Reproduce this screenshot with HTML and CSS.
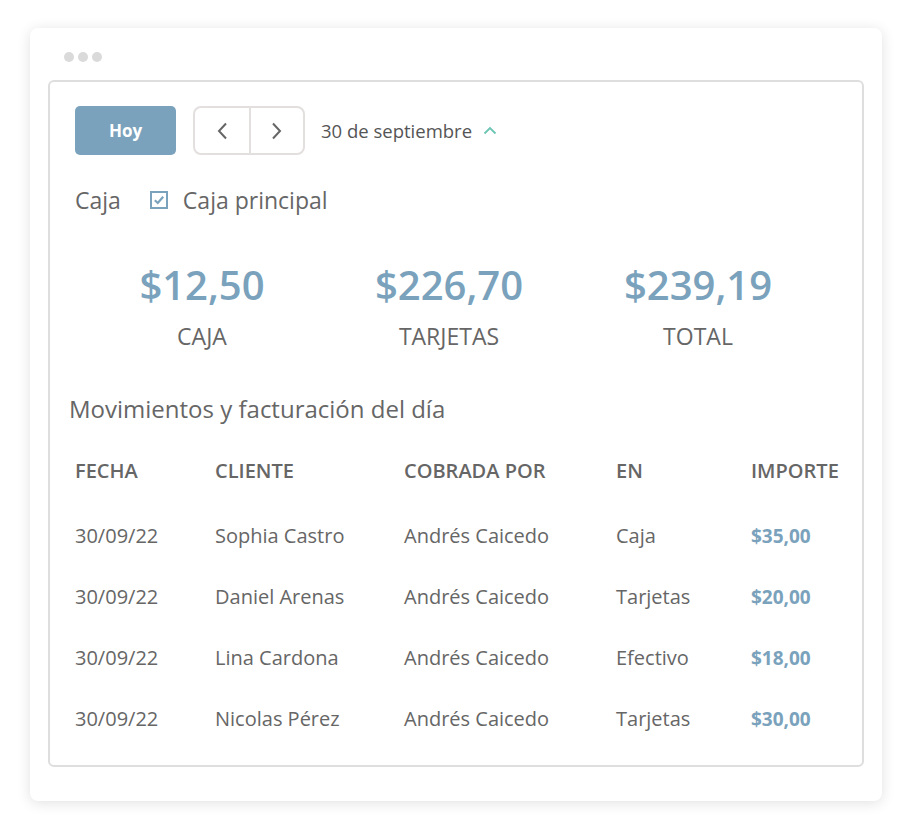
FILE: index.html
```html
<!DOCTYPE html>
<html lang="es">
<head>
    <meta charset="UTF-8">
    <meta name="viewport" content="width=device-width, initial-scale=1.0">
    <title>Caja</title>
    <link rel="stylesheet" href="styles.css">
</head>
<body>
    <div class="window">
        <div class="dots">
            <span></span><span></span><span></span>
        </div>

        <div class="panel">
            <div class="toolbar">
                <button class="today">Hoy</button>
                <div class="nav">
                    <button class="nav-btn">
                        <svg width="12" height="20" viewBox="0 0 12 20"><path d="M10 2.5 L3 10 L10 17.5" fill="none" stroke="#666" stroke-width="2"/></svg>
                    </button>
                    <button class="nav-btn">
                        <svg width="12" height="20" viewBox="0 0 12 20"><path d="M2 2.5 L9 10 L2 17.5" fill="none" stroke="#666" stroke-width="2"/></svg>
                    </button>
                </div>
                <span class="date">30 de septiembre</span>
                <svg class="caret" width="14" height="9" viewBox="0 0 14 9"><path d="M1.5 7.5 L7 2 L12.5 7.5" fill="none" stroke="#6cc4b4" stroke-width="1.8"/></svg>
            </div>

            <div class="caja-row">
                <span class="caja-label">Caja</span>
                <span class="check">
                    <svg width="18" height="18" viewBox="0 0 18 18"><rect x="1" y="1" width="16" height="16" fill="none" stroke="#7aa2bc" stroke-width="2"/><path d="M4.8 9.2 L7.8 12 L13.2 5.8" fill="none" stroke="#7aa2bc" stroke-width="2.2"/></svg>
                </span>
                <span class="caja-label">Caja principal</span>
            </div>

            <div class="stats">
                <div class="stat">
                    <div class="stat-value">$12,50</div>
                    <div class="stat-label">CAJA</div>
                </div>
                <div class="stat">
                    <div class="stat-value">$226,70</div>
                    <div class="stat-label">TARJETAS</div>
                </div>
                <div class="stat">
                    <div class="stat-value">$239,19</div>
                    <div class="stat-label">TOTAL</div>
                </div>
            </div>

            <h2 class="section-title">Movimientos y facturación del día</h2>

            <div class="table">
                <div class="row head">
                    <span>FECHA</span><span>CLIENTE</span><span>COBRADA POR</span><span>EN</span><span>IMPORTE</span>
                </div>
                <div class="row">
                    <span>30/09/22</span><span>Sophia Castro</span><span>Andrés Caicedo</span><span>Caja</span><span class="amount">$35,00</span>
                </div>
                <div class="row">
                    <span>30/09/22</span><span>Daniel Arenas</span><span>Andrés Caicedo</span><span>Tarjetas</span><span class="amount">$20,00</span>
                </div>
                <div class="row">
                    <span>30/09/22</span><span>Lina Cardona</span><span>Andrés Caicedo</span><span>Efectivo</span><span class="amount">$18,00</span>
                </div>
                <div class="row">
                    <span>30/09/22</span><span>Nicolas Pérez</span><span>Andrés Caicedo</span><span>Tarjetas</span><span class="amount">$30,00</span>
                </div>
            </div>
        </div>
    </div>
</body>
</html>
```

FILE: styles.css
```css
body {
    font-family: "Open Sans", sans-serif;
    background-color: #ffffff;
    margin: 0;
    padding: 28px 30px 33px 30px;
    color: #666;
}

.window {
    background-color: #fff;
    border-radius: 8px;
    box-shadow: 0 2px 14px rgba(0, 0, 0, 0.12);
    padding: 24px 18px 34px 18px;
}

.dots {
    display: flex;
    gap: 4px;
    padding-left: 16px;
    height: 10px;
    margin-bottom: 18px;
}

.dots span {
    width: 10px;
    height: 10px;
    border-radius: 50%;
    background-color: #dadada;
}

.panel {
    border: 2px solid #dedede;
    border-radius: 6px;
    padding: 24px 20px 16px 25px;
}

.toolbar {
    display: flex;
    align-items: center;
}

button {
    font-family: inherit;
    cursor: pointer;
}

.today {
    width: 101px;
    height: 49px;
    background-color: #7aa2bc;
    color: #fff;
    border: none;
    border-radius: 5px;
    font-size: 17px;
    font-weight: 700;
}

.nav {
    display: flex;
    margin-left: 17px;
    border: 2px solid #e4dfdf;
    border-radius: 8px;
    height: 45px;
}

.nav-btn {
    width: 54px;
    background: none;
    border: none;
    display: flex;
    align-items: center;
    justify-content: center;
    padding: 0;
}

.nav-btn + .nav-btn {
    border-left: 2px solid #e4dfdf;
}

.date {
    margin-left: 16px;
    font-size: 18.5px;
    color: #555;
}

.caret {
    margin-left: 11px;
}

.caja-row {
    display: flex;
    align-items: center;
    margin-top: 30px;
    height: 30px;
}

.caja-label {
    font-size: 23px;
    color: #666;
}

.check {
    display: flex;
    margin-left: 29px;
    margin-right: 15px;
}

.stats {
    display: grid;
    grid-template-columns: 254px 240px 258px;
    margin-top: 42px;
}

.stat {
    text-align: center;
}

.stat-value {
    font-size: 40px;
    font-weight: 600;
    color: #7aa2bc;
    line-height: 56px;
}

.stat-label {
    font-size: 23px;
    line-height: 30px;
    margin-top: 8px;
    color: #666;
}

.section-title {
    font-size: 24px;
    line-height: 30px;
    font-weight: 400;
    color: #666;
    margin: 43px 0 0 -6px;
}

.table {
    margin-top: 26px;
}

.row {
    display: grid;
    grid-template-columns: 140px 189px 212px 135px auto;
    font-size: 20px;
    height: 61px;
    align-items: center;
}

.row.head {
    font-size: 20px;
    font-weight: 600;
    height: 40px;
    margin-bottom: 15px;
}

.amount {
    color: #7aa2bc;
    font-weight: 700;
    font-size: 19px;
}
```
